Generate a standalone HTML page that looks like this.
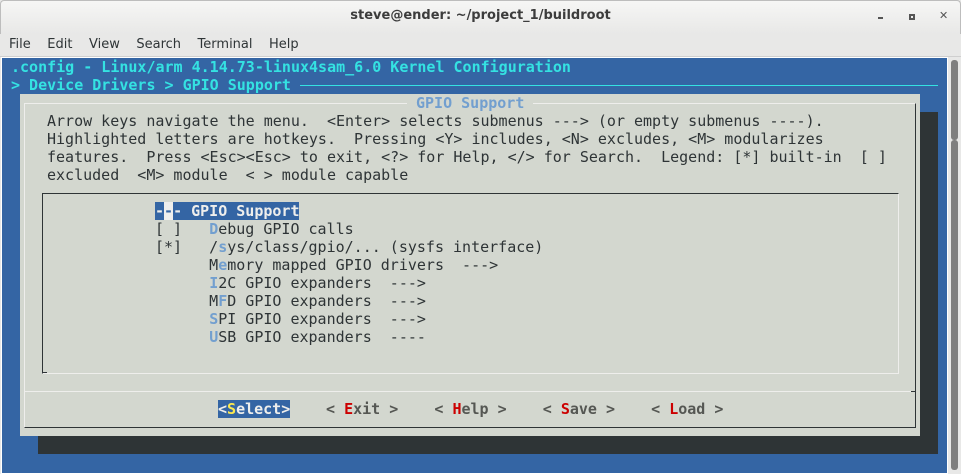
<!DOCTYPE html>
<html><head><meta charset="utf-8"><style>
*{margin:0;padding:0;box-sizing:border-box}
body{width:961px;height:474px;overflow:hidden;background:#e8e8e7;position:relative;font-family:"DejaVu Sans Mono","Liberation Mono",monospace}
.abs{position:absolute}
.t{position:absolute;font-size:15px;line-height:18px;white-space:pre;color:#2e3436;font-family:"DejaVu Sans Mono",monospace}
.hk{color:#729fcf;font-weight:bold}
.r{color:#cc0000}
.b{font-weight:bold}
</style></head><body>
<div class="abs" style="left:0;top:0;width:961px;height:34px;background:linear-gradient(#f6f6f5,#e8e8e7);border:1px solid #bdbdbd;border-bottom:none;border-radius:4px 4px 0 0"></div>
<div class="abs" style="left:0;top:8px;width:961px;text-align:center;font:bold 13px 'DejaVu Sans',sans-serif;color:#3c3c3c">steve@ender: ~/project_1/buildroot</div>
<div class="abs" style="left:878px;top:17px;width:5px;height:2px;background:#555"></div>
<div class="abs" style="left:909px;top:14px;width:6px;height:6px;border:2px solid #555"></div>
<div class="abs" style="left:939px;top:9px;font:bold 11px 'DejaVu Sans',sans-serif;color:#555">✕</div>
<div class="abs" style="left:9px;top:37px;font:13px 'DejaVu Sans',sans-serif;color:#2e3436;word-spacing:0">File&nbsp;&nbsp;&nbsp;&nbsp;Edit&nbsp;&nbsp;&nbsp;&nbsp;View&nbsp;&nbsp;&nbsp;&nbsp;Search&nbsp;&nbsp;&nbsp;&nbsp;Terminal&nbsp;&nbsp;&nbsp;&nbsp;Help</div>
<div class="abs" style="left:0;top:56px;width:961px;height:1px;background:#cfcfcf"></div>
<div class="abs" style="left:1px;top:57px;width:947px;height:417px;background:#3465a4;border:1px solid #fff"></div>
<div class="abs" style="left:949px;top:57px;width:12px;height:417px;background:#e8e8e7"></div>
<div class="abs" style="left:951px;top:60px;width:7px;height:80px;background:#7f7f7f;border-radius:3px"></div>
<div class="abs" style="left:951px;top:140px;width:7px;height:330px;background:#7f7f7f;border-radius:3px"></div>
<div class="t b" style="left:11px;top:58px;color:#34e2e2">.config - Linux/arm 4.14.73-linux4sam_6.0 Kernel Configuration</div>
<div class="t b" style="left:11px;top:76px;color:#34e2e2">&gt; Device Drivers &gt; GPIO Support</div>
<div class="abs" style="left:300px;top:85px;width:638px;height:1px;background:#34e2e2"></div>
<div class="abs" style="left:38px;top:112px;width:900px;height:342px;background:#2e3436"></div>
<div class="abs" style="left:20px;top:94px;width:900px;height:342px;background:#d3d7cf"></div>
<div class="abs" style="left:24px;top:103px;width:892px;height:325px;border-top:1px solid #eeeeec;border-left:1px solid #eeeeec;border-right:1px solid #2e3436;border-bottom:1px solid #2e3436"></div>
<div class="abs" style="left:407px;top:98px;width:126px;height:10px;background:#d3d7cf"></div>
<div class="t b" style="left:416px;top:94px;color:#729fcf">GPIO Support</div>
<div class="t" style="left:47px;top:112px">Arrow keys navigate the menu.  &lt;Enter&gt; selects submenus ---&gt; (or empty submenus ----).
Highlighted letters are hotkeys.  Pressing &lt;Y&gt; includes, &lt;N&gt; excludes, &lt;M&gt; modularizes
features.  Press &lt;Esc&gt;&lt;Esc&gt; to exit, &lt;?&gt; for Help, &lt;/&gt; for Search.  Legend: [*] built-in  [ ]
excluded  &lt;M&gt; module  &lt; &gt; module capable</div>
<div class="abs" style="left:42px;top:193px;width:857px;height:181px;border-top:1px solid #2e3436;border-left:1px solid #2e3436;border-right:1px solid #eeeeec;border-bottom:1px solid #eeeeec"></div>
<div class="abs" style="left:42px;top:372px;width:5px;height:1px;background:#2e3436"></div>
<div class="abs" style="left:155px;top:202px;width:144px;height:18px;background:#3465a4"></div>
<div class="abs" style="left:164px;top:202px;width:9px;height:18px;background:#eeeeec"></div>
<div class="t b" style="left:155px;top:202px;color:#eeeeec">-<span style="color:#3465a4">-</span>- GPIO Support</div>
<div class="t" style="left:155px;top:220px">[ ]   <span class="hk">D</span>ebug GPIO calls
[*]   /<span class="hk">s</span>ys/class/gpio/... (sysfs interface)
      M<span class="hk">e</span>mory mapped GPIO drivers  ---&gt;
      <span class="hk">I</span>2C GPIO expanders  ---&gt;
      M<span class="hk">F</span>D GPIO expanders  ---&gt;
      <span class="hk">S</span>PI GPIO expanders  ---&gt;
      <span class="hk">U</span>SB GPIO expanders  ----</div>
<div class="abs" style="left:25px;top:391px;width:890px;height:1px;background:#eeeeec"></div>
<div class="abs" style="left:911px;top:391px;width:5px;height:1px;background:#2e3436"></div>
<div class="abs" style="left:218px;top:400px;width:72px;height:18px;background:#3465a4"></div>
<div class="t b" style="left:218px;top:400px;color:#eeeeec">&lt;<span style="color:#fce94f">S</span>elect&gt;</div>
<div class="t b" style="left:326px;top:400px;color:#555753">&lt; <span class="r">E</span>xit &gt;    &lt; <span class="r">H</span>elp &gt;    &lt; <span class="r">S</span>ave &gt;    &lt; <span class="r">L</span>oad &gt;</div>
</body></html>
